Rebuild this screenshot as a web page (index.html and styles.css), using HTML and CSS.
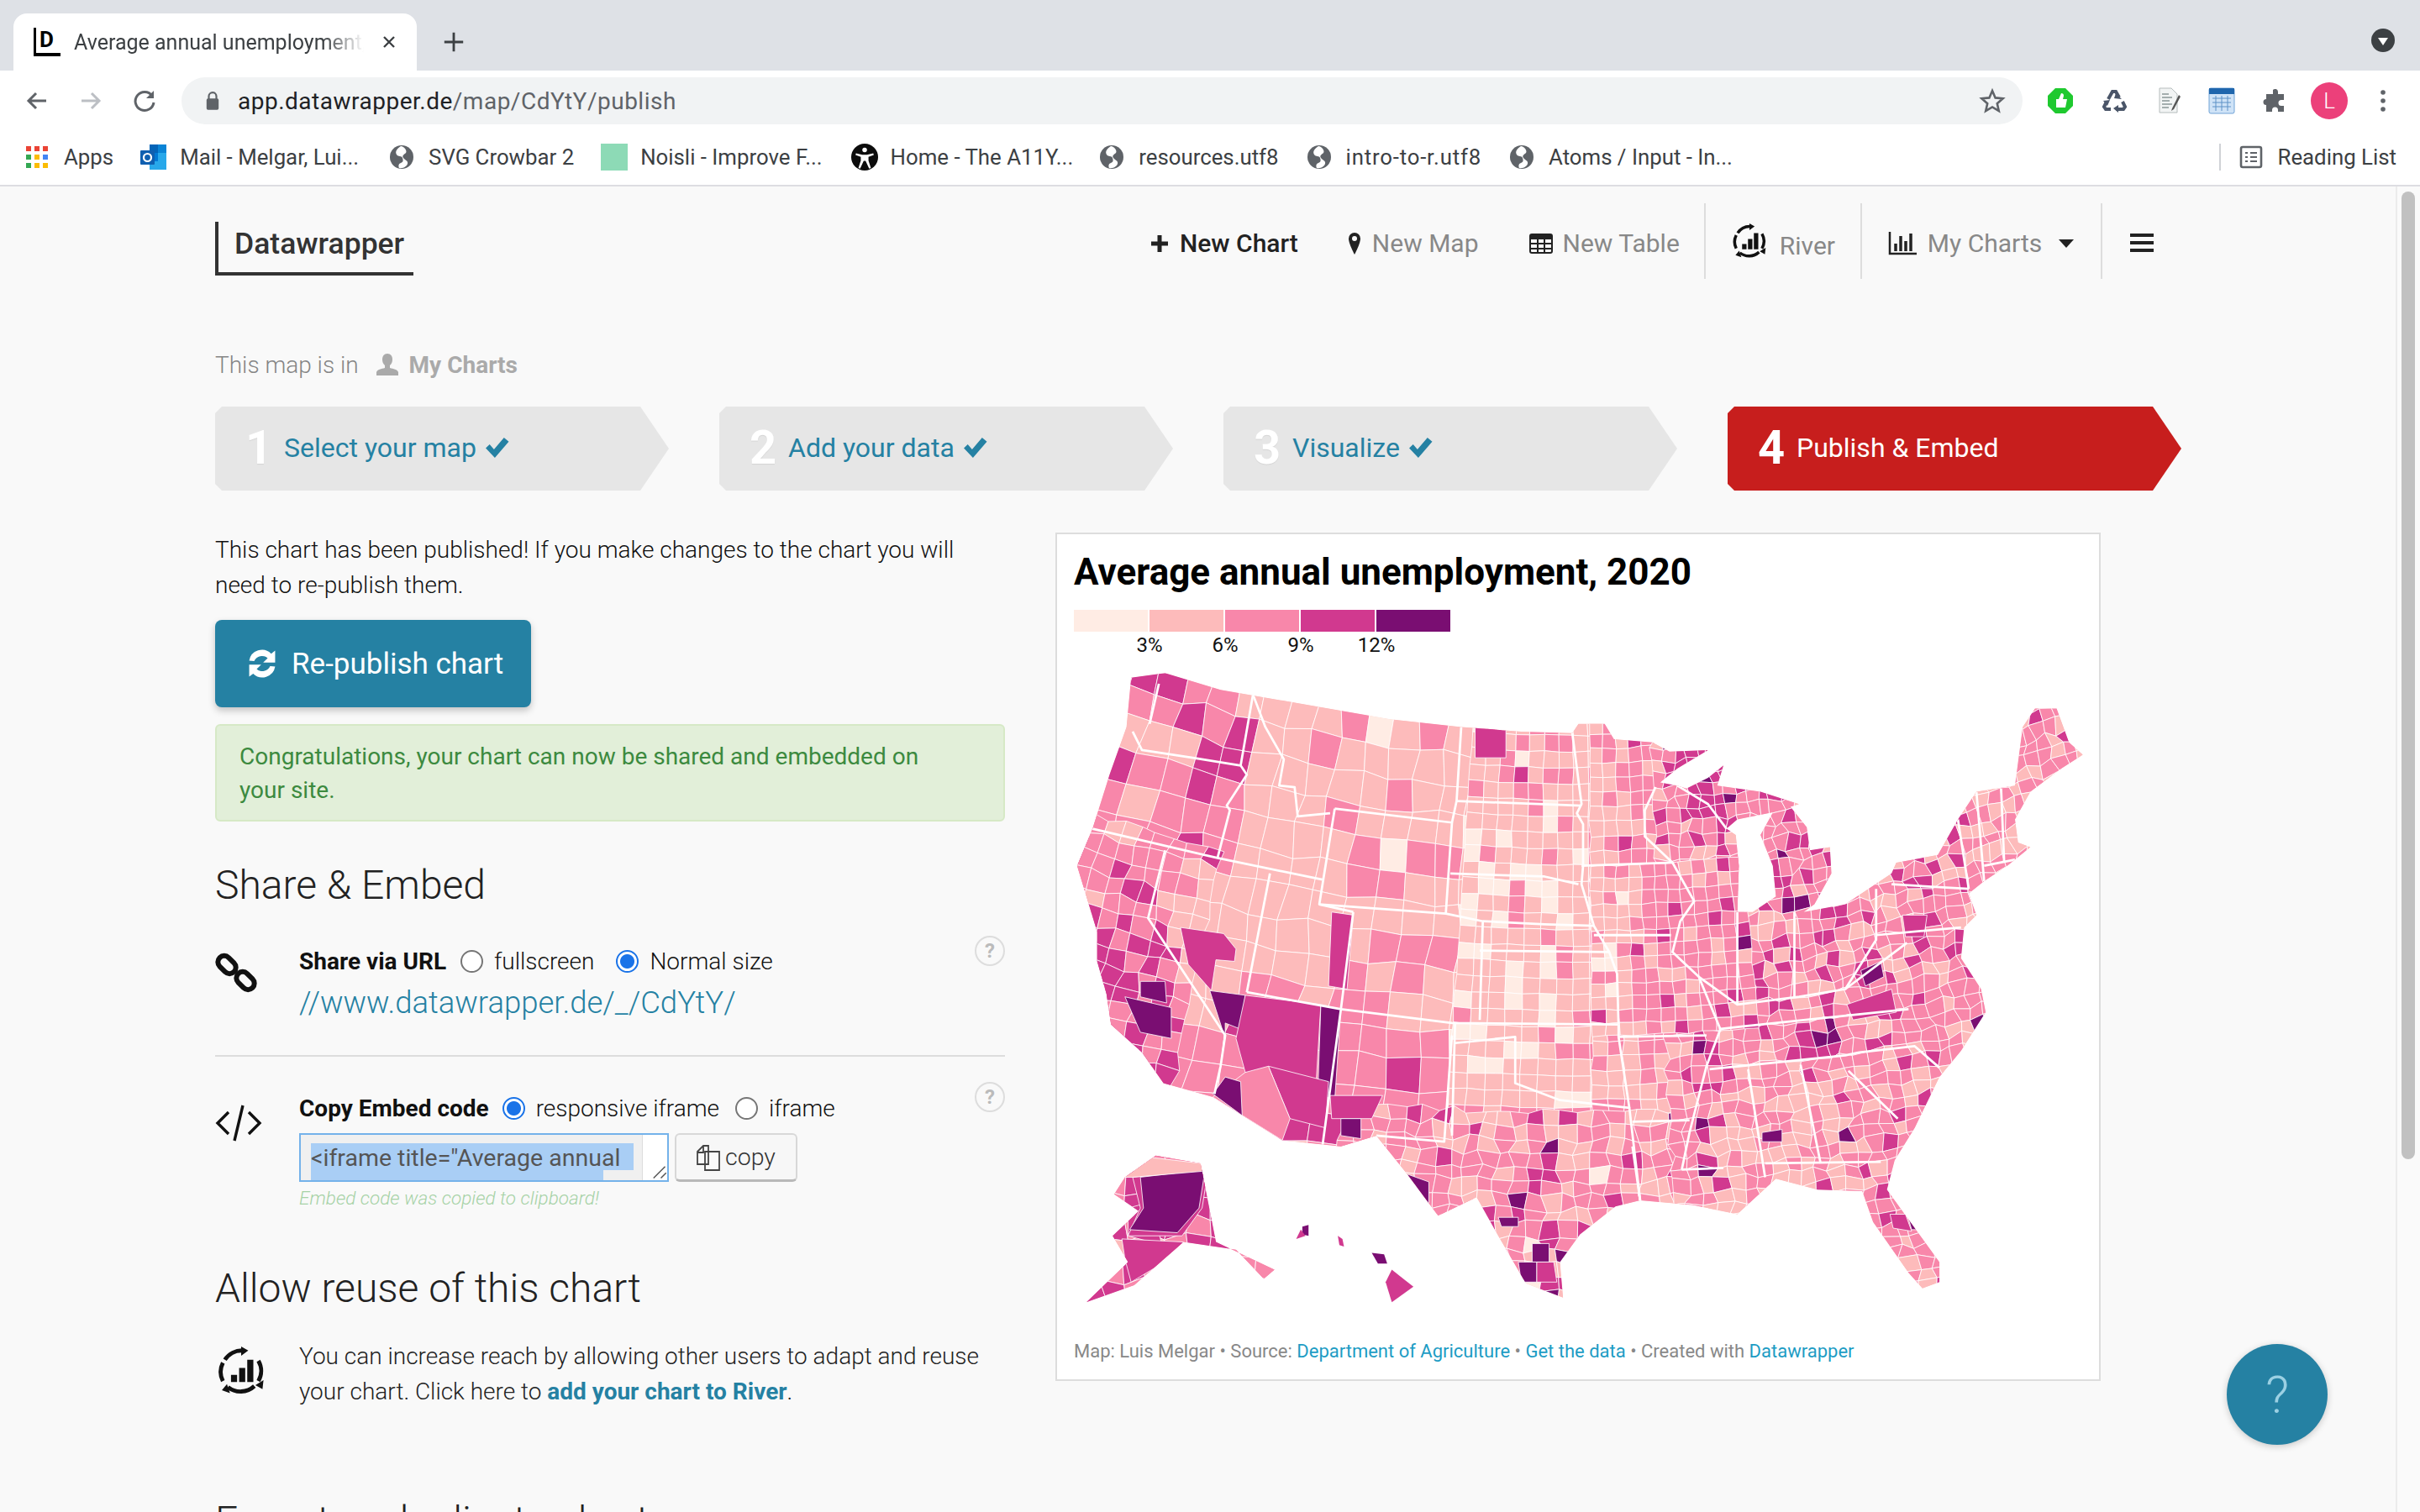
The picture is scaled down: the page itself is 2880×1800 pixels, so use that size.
FILE: index.html
```html
<!DOCTYPE html>
<html lang="en">
<head>
<meta charset="utf-8">
<title>Average annual unemployment, 2020</title>
<link rel="stylesheet" href="styles.css">
</head>
<body>
<header class="chrome">
  <div class="tabstrip">
    <div class="tab">
      <span class="favicon">D</span>
      <span class="tab-title">Average annual unemployment, 2020</span>
      <svg class="tab-close" viewBox="0 0 20 20"><path d="M4 4l12 12M16 4L4 16" stroke="#3c4043" stroke-width="2.4"/></svg>
    </div>
    <svg class="tab-new" viewBox="0 0 30 30"><path d="M15 3v24M3 15h24" stroke="#3c4043" stroke-width="3"/></svg>
    <span class="strip-fill"></span>
    <span class="profile-dot"><svg viewBox="0 0 28 28"><circle cx="14" cy="14" r="14" fill="#3c4043"/><path d="M8 11h12l-6 9z" fill="#fff"/></svg></span>
  </div>
  <div class="toolbar">
    <svg class="tb-ico" viewBox="0 0 32 32"><path d="M27 16H7M15 7l-9 9 9 9" fill="none" stroke="#5f6368" stroke-width="3"/></svg>
    <svg class="tb-ico" viewBox="0 0 32 32"><path d="M5 16h20M17 7l9 9-9 9" fill="none" stroke="#bcbfc4" stroke-width="3"/></svg>
    <svg class="tb-ico" viewBox="0 0 32 32"><path d="M25 10a11 11 0 1 0 2 8" fill="none" stroke="#5f6368" stroke-width="3"/><path d="M27 4v9h-9z" fill="#5f6368"/></svg>
    <div class="omnibox">
      <svg class="lock" viewBox="0 0 20 26"><path d="M5 11V7a5 5 0 0 1 10 0v4" fill="none" stroke="#5f6368" stroke-width="2.4"/><rect x="2" y="10" width="16" height="15" rx="2" fill="#5f6368"/></svg>
      <span class="url"><b>app.datawrapper.de</b>/map/CdYtY/publish</span>
      <svg class="star" viewBox="0 0 32 32"><path d="M16 4l3.6 8.4 9 .8-6.800 6 2 8.900L16 23.400l-7.800 4.700 2-8.900-6.800-6 9-.8z" fill="none" stroke="#5f6368" stroke-width="2.600"/></svg>
    </div>
    <div class="ext-row">
      <svg class="ext" viewBox="0 0 32 32"><path d="M10 1h12l9 9v12l-9 9H10l-9-9V10z" fill="#1fc92f"/><path d="M11 14h3l3-7c2 0 3 1 3 3l-1 4h5l-2 10H11z" fill="#fff"/></svg>
      <svg class="ext" viewBox="0 0 32 32"><g fill="none" stroke="#4a5568" stroke-width="4"><path d="M9 14l5-9h4l4 7"/><path d="M26 17l3 6-2 3h-9"/><path d="M12 26H6l-2-3 3-6"/></g><path d="M18 7l7 7-9-1zM21 21v9l-6-5zM3 16l8-1-3 7z" fill="#4a5568"/></svg>
      <svg class="ext" viewBox="0 0 32 32"><path d="M6 1h14l7 7v22H6z" fill="#f2f4f4" stroke="#b5bcbc"/><path d="M9 8h8M9 12h12M9 16h9M9 20h12M9 24h8" stroke="#8b9696" stroke-width="1.500"/><path d="M29 9l-8 16-1 3 3-2 8-15z" fill="#555"/></svg>
      <svg class="ext" viewBox="0 0 32 32"><rect x="1" y="1" width="30" height="30" rx="2" fill="#cfe3f7" stroke="#70a3d6"/><rect x="1" y="1" width="30" height="7" fill="#1f66ad"/><path d="M5 13h22M5 18h22M5 23h22M9 10v18M16 10v18M23 10v18" stroke="#5c91c6"/></svg>
      <svg class="ext" viewBox="0 0 32 32"><path d="M13 3a3.500 3.500 0 0 1 6 2v3h7v7h-3a3.500 3.500 0 0 0 0 7h3v7h-7v-2a3.500 3.500 0 0 0-7 0v2H5v-8a3.500 3.500 0 0 1 0-7V8h8z" fill="#5f6368"/></svg>
      <span class="avatar">L</span>
      <svg class="ext kebab" viewBox="0 0 8 32"><circle cx="4" cy="6" r="2.800" fill="#5f6368"/><circle cx="4" cy="16" r="2.800" fill="#5f6368"/><circle cx="4" cy="26" r="2.800" fill="#5f6368"/></svg>
    </div>
  </div>
  <div class="bookmarks">
    <span class="bm"><svg class="bm-ico" viewBox="0 0 28 28"><g><rect x="1" y="1" width="6" height="6" fill="#ea4335"/><rect x="11" y="1" width="6" height="6" fill="#ea4335"/><rect x="21" y="1" width="6" height="6" fill="#ea4335"/><rect x="1" y="11" width="6" height="6" fill="#34a853"/><rect x="11" y="11" width="6" height="6" fill="#fbbc04"/><rect x="21" y="11" width="6" height="6" fill="#4285f4"/><rect x="1" y="21" width="6" height="6" fill="#34a853"/><rect x="11" y="21" width="6" height="6" fill="#fbbc04"/><rect x="21" y="21" width="6" height="6" fill="#fbbc04"/></g></svg>Apps</span>
    <span class="bm tight"><svg class="bm-ico outlook" viewBox="0 0 32 32"><rect x="11" y="1" width="20" height="30" fill="#28a8ea"/><rect x="11" y="1" width="10" height="10" fill="#0364b8"/><rect x="21" y="1" width="10" height="10" fill="#0a84d6"/><rect x="11" y="11" width="10" height="10" fill="#0078d4"/><rect x="0" y="8" width="17" height="17" rx="1" fill="#0f5fb0"/><circle cx="8.500" cy="16.500" r="4.500" fill="none" stroke="#fff" stroke-width="2.200"/></svg>Mail - Melgar, Lui...</span>
    <span class="bm bm-svg"><svg class="bm-ico" viewBox="0 0 28 28"><use href="#globe"/></svg>SVG Crowbar 2</span>
    <span class="bm tight"><span class="noisli"></span>Noisli - Improve F...</span>
    <span class="bm tight bm-home"><svg class="bm-ico a11y" viewBox="0 0 28 28"><circle cx="14" cy="14" r="14" fill="#0c0c0c"/><circle cx="14" cy="6.500" r="2.400" fill="#fff"/><path d="M5 10l6.500 1.500h5L23 10l.5 1.800-5.500 2v4l2.500 7.500-1.800.7L15 18h-2l-3.700 8-1.800-.7L10 17.800v-4l-5.500-2z" fill="#fff"/></svg>Home - The A11Y...</span>
    <span class="bm"><svg class="bm-ico" viewBox="0 0 28 28"><use href="#globe"/></svg>resources.utf8</span>
    <span class="bm bm-intro"><svg class="bm-ico" viewBox="0 0 28 28"><use href="#globe"/></svg>intro-to-r.utf8</span>
    <span class="bm"><svg class="bm-ico" viewBox="0 0 28 28"><use href="#globe"/></svg>Atoms / Input - In...</span>
    <span class="bm-fill"></span>
    <span class="bm reading"><svg class="bm-ico" viewBox="0 0 28 28"><rect x="2" y="2" width="24" height="24" rx="2" fill="none" stroke="#5f6368" stroke-width="2.600"/><path d="M7 9h3M13 9h8M7 14h3M13 14h8M7 19h3M13 19h8" stroke="#5f6368" stroke-width="2.200"/></svg>Reading List</span>
  </div>
  <svg class="defs" width="0" height="0"><defs><g id="globe"><circle cx="14" cy="14" r="14" fill="#5f6368"/><path d="M13 1c-5 3-7 7-5 10s6 1 7 4 1 5-2 6-3 4-2 6c5 1 9-2 10-5 1-4-3-4-5-7s1-4 3-6-2-8-6-8z" fill="#fff"/></g></defs></svg>
</header>

<div class="viewport">
  <main class="page">
    <nav class="topnav">
      <div class="logo">Datawrapper</div>
      <div class="nav-links">
        <a class="nav-item strong"><svg class="ni" viewBox="0 0 24 24"><path d="M12 2v20M2 12h20" stroke="#222" stroke-width="5"/></svg>New Chart</a>
        <a class="nav-item maplink"><svg class="ni pin" viewBox="0 0 16 28"><path d="M8 1a7 7 0 0 0-7 7c0 6 7 19 7 19s7-13 7-19a7 7 0 0 0-7-7z" fill="#222"/><circle cx="8" cy="8" r="3" fill="#f9f9f9"/></svg>New Map</a>
        <a class="nav-item tablelink"><svg class="ni" viewBox="0 0 28 24"><rect x="1" y="1" width="26" height="22" rx="2" fill="none" stroke="#222" stroke-width="2"/><rect x="1" y="1" width="26" height="6" fill="#222"/><path d="M1 12h26M1 18h26M10 6v17M18 6v17" stroke="#222" stroke-width="2"/></svg>New Table</a>
        <a class="nav-item boxed river"><svg class="ni river-ico" viewBox="0 0 48 48"><use href="#rivermark"/></svg><span>River</span></a>
        <a class="nav-item boxed charts"><svg class="ni" viewBox="0 0 34 30"><path d="M2 1v26h32" fill="none" stroke="#222" stroke-width="2.500"/><path d="M9 24v-9M15 24V6M21 24V12M27 24V3" stroke="#222" stroke-width="3.500"/></svg>My Charts<i class="caret"></i></a>
        <a class="nav-item burger"><svg viewBox="0 0 28 24"><path d="M0 3h28M0 12h28M0 21h28" stroke="#222" stroke-width="4"/></svg></a>
      </div>
    </nav>
    <svg class="defs" width="0" height="0"><defs><g id="rivermark"><path d="M8 13A20 20 0 0 1 26 4M41 14a20 20 0 0 1 0 20M37 39a20 20 0 0 1-26 1M6 34a20 20 0 0 1 0-18" fill="none" stroke="#111" stroke-width="4"/><path d="M24 0l7 4-7 5zM46 33l-1 9-7-4zM13 46l-8-3 5-6z" fill="#111"/><path d="M14 28h6v7h-6zM22 21h6v14h-6zM30 13h6v22h-6z" fill="#111"/></g></defs></svg>

    <div class="crumb">This map is in <svg class="user" viewBox="0 0 28 28"><path d="M14 1c-4 0-6 3-6 7 0 3 1 5 3 7v3c-4 1-9 2-10 5v4h26v-4c-1-3-6-4-10-5v-3c2-2 3-4 3-7 0-4-2-7-6-7z" fill="#aaa"/></svg><b>My Charts</b></div>

    <ol class="steps">
      <li class="step"><span class="num">1</span><span class="label">Select your map</span><svg class="check" viewBox="0 0 28 24"><path d="M1 13l4.500-4.500 5 6L22 1l5.500 4.500L11.500 24z" fill="#2581a3"/></svg></li>
      <li class="step"><span class="num">2</span><span class="label">Add your data</span><svg class="check" viewBox="0 0 28 24"><path d="M1 13l4.500-4.500 5 6L22 1l5.500 4.500L11.500 24z" fill="#2581a3"/></svg></li>
      <li class="step"><span class="num">3</span><span class="label">Visualize</span><svg class="check" viewBox="0 0 28 24"><path d="M1 13l4.500-4.500 5 6L22 1l5.500 4.500L11.500 24z" fill="#2581a3"/></svg></li>
      <li class="step active"><span class="num">4</span><span class="label">Publish &amp; Embed</span></li>
    </ol>

    <div class="columns">
      <section class="left">
        <p class="intro">This chart has been published! If you make changes to the chart you will need to re-publish them.</p>
        <button class="btn-primary"><svg viewBox="0 0 32 32"><path d="M3 13A13 13 0 0 1 25 6l4-3v12H17l4.500-4.500a8.500 8.500 0 0 0-13.500 3zM29 19A13 13 0 0 1 7 26l-4 3V17h12l-4.500 4.500a8.500 8.500 0 0 0 13.500-3z" fill="#fff"/></svg>Re-publish chart</button>
        <div class="alert">Congratulations, your chart can now be shared and embedded on your site.</div>
        <h2 class="h-share">Share &amp; Embed</h2>

        <div class="share-row first">
          <svg class="row-ico link" viewBox="0 0 50 50"><g fill="none" stroke="#111" stroke-width="6"><rect x="2" y="8" width="24" height="15" rx="7.500" transform="rotate(45 14 15.500)"/><rect x="24" y="27" width="24" height="15" rx="7.500" transform="rotate(45 36 34.500)"/></g></svg>
          <div class="row-body">
            <div class="opts"><b>Share via URL</b><label class="opt"><i class="radio"></i>fullscreen</label><label class="opt"><i class="radio on"></i>Normal size</label></div>
            <a class="share-url">//www.datawrapper.de/_/CdYtY/</a>
          </div>
          <span class="help">?</span>
        </div>

        <div class="share-row second">
          <svg class="row-ico code" viewBox="0 0 56 44"><path d="M16 9L3 22l13 13M40 9l13 13-13 13M33 1l-10 42" fill="none" stroke="#111" stroke-width="3.400"/></svg>
          <div class="row-body">
            <div class="opts"><b>Copy Embed code</b><label class="opt"><i class="radio on"></i>responsive iframe</label><label class="opt"><i class="radio"></i>iframe</label></div>
            <div class="embed">
              <div class="embed-box">
                <div class="embed-text"><span class="sel">&lt;iframe title="Average annual</span><span class="sel2"></span></div>
                <div class="embed-side"><svg viewBox="0 0 16 16"><path d="M14 3L3 14M15 9l-5 5" stroke="#555" stroke-width="1.200"/></svg></div>
              </div>
              <button class="btn-copy"><svg viewBox="0 0 28 32"><path d="M1 9l7-7h6v22H1zM10 9h6l5 0 6 0v22H10z" fill="#f9f9f9" stroke="#444" stroke-width="1.800"/><path d="M8 2v8H1" fill="none" stroke="#444" stroke-width="1.800"/></svg>copy</button>
            </div>
            <div class="copied">Embed code was copied to clipboard!</div>
          </div>
          <span class="help">?</span>
        </div>

        <h2 class="h-reuse">Allow reuse of this chart</h2>
        <div class="share-row reuse">
          <svg class="row-ico riv" viewBox="0 0 48 48"><use href="#rivermark"/></svg>
          <p class="reuse-text">You can increase reach by allowing other users to adapt and reuse your chart. Click here to <a>add your chart to River</a>.</p>
        </div>
        <h2 class="h-export">Export or duplicate chart</h2>
      </section>

      <section class="chart">
        <h1 class="chart-title">Average annual unemployment, 2020</h1>
        <div class="legend"><i class="c0"></i><i class="c1"></i><i class="c2"></i><i class="c3"></i><i class="c4"></i></div>
        <div class="legend-labels"><span>3%</span><span>6%</span><span>9%</span><span>12%</span></div>
        <svg id="usmap" class="map" viewBox="695 430 660 420"></svg>
        <p class="chart-foot">Map: Luis Melgar • Source: <a>Department of Agriculture</a> • <a>Get the data</a> • Created with <a>Datawrapper</a></p>
      </section>
    </div>
  </main>
  <div class="scrollbar"><span class="thumb"></span></div>
  <button class="fab">?</button>
</div>
<script src="map.js"></script>
</body>
</html>
```
FILE: styles.css
```css
* { box-sizing: border-box; }
html, body { margin: 0; height: 100%; overflow: hidden; }
body { width: 2880px; height: 1800px; font-family: Roboto, "Liberation Sans", sans-serif; display: flex; flex-direction: column; background: #f9f9f9; }
.defs { position: absolute; }

/* browser chrome */
.chrome { flex: none; background: #fff; border-bottom: 2px solid #dddde2; height: 222px; }
.tabstrip { height: 84px; background: #dee1e6; display: flex; align-items: flex-end; padding-left: 16px; }
.tab { width: 480px; height: 68px; background: #fff; border-radius: 16px 16px 0 0; display: flex; align-items: center; padding: 0 23px 0 24px; color: #3c4043; font-size: 25px; position: relative; }
.favicon { width: 32px; height: 34px; border-left: 3px solid #000; border-bottom: 4px solid #000; font-weight: 700; font-size: 26px; line-height: 28px; color: #000; padding-left: 4px; flex: none; margin-right: 16px; }
.tab-title { flex: 1; white-space: nowrap; overflow: hidden; -webkit-mask-image: linear-gradient(90deg, #000 86%, transparent); mask-image: linear-gradient(90deg, #000 86%, transparent); }
.tab-close { width: 20px; height: 20px; margin-left: 20px; flex: none; }
.tab-new { width: 28px; height: 28px; margin: 0 0 20px 30px; }
.strip-fill { flex: 1; }
.profile-dot { width: 28px; height: 28px; margin: 0 30px 22px 0; }
.profile-dot svg { display: block; }
.toolbar { height: 64px; padding: 8px 0 0 28px; display: flex; align-items: center; gap: 32px; }
.tb-ico { width: 32px; height: 32px; flex: none; }
.omnibox { margin-left: -4px; width: 2191px; height: 56px; border-radius: 28px; background: #f1f3f4; display: flex; align-items: center; padding: 0 20px 0 28px; font-size: 28px; color: #5f6368; flex: none; }
.lock { width: 18px; height: 24px; margin-right: 21px; }
.url { flex: 1; letter-spacing: .5px; }
.url b { font-weight: 400; color: #202124; }
.star { width: 32px; height: 32px; }
.ext-row { display: flex; align-items: center; gap: 32px; margin-left: -3px; }
.ext { width: 32px; height: 32px; flex: none; }
.kebab { width: 8px; margin-left: 12px; }
.avatar { width: 44px; height: 44px; border-radius: 50%; background: #ec407a; color: #fff; font-size: 26px; font-weight: 300; display: flex; align-items: center; justify-content: center; margin: 0 -6px; }
.bookmarks { height: 72px; display: flex; align-items: center; padding: 6px 0 0 30px; gap: 32px; font-size: 25.800px; color: #3c4043; }
.bm { display: flex; align-items: center; gap: 18px; white-space: nowrap; }
.bm.tight { gap: 15px; }
.bm-svg { margin-left: 5px; }
.bm-home { margin-left: 2px; }
.bm-intro { margin-left: 2px; letter-spacing: .8px; margin-right: 2px; }
.bm-ico { width: 28px; height: 28px; flex: none; }
.outlook { width: 32px; height: 32px; }
.a11y { width: 32px; height: 32px; }
.noisli { width: 32px; height: 32px; background: #8ddab6; }
.bm-fill { flex: 1; }
.reading { border-left: 2px solid #d0d2d6; height: 32px; padding-left: 22px; margin-right: 28px; }

/* viewport */
.viewport { flex: 1; display: flex; overflow: hidden; position: relative; min-height: 0; }
.page { flex: 1; min-width: 0; padding: 0 0 0 256px; overflow: hidden; }
.scrollbar { width: 29px; flex: none; border-left: 2px solid #ececec; background: #fafafa; padding: 6px 6px 0 5px; }
.thumb { display: block; width: 16px; height: 1152px; border-radius: 8px; background: #c1c1c1; }
.fab { position: absolute; left: 2650px; top: 1378px; width: 120px; height: 120px; border-radius: 50%; background: #2581a3; border: 0; color: #9bd0e3; font: 300 62px Roboto, sans-serif; box-shadow: 0 2px 8px rgba(0,0,0,.2); }

/* top nav */
.topnav { display: flex; align-items: flex-start; height: 178px; padding-top: 20px; }
.logo { width: 236px; height: 64px; margin-top: 22px; border-left: 4px solid #333; border-bottom: 4px solid #333; font-size: 35.500px; font-weight: 500; line-height: 52px; padding-left: 19px; color: #333; white-space: nowrap; flex: none; }
.nav-links { display: flex; margin-left: 876px; height: 90px; align-items: center; color: #888; }
.nav-item { display: flex; align-items: center; height: 90px; white-space: nowrap; font-size: 30px; margin-right: 59px; padding-top: 5px; }
.nav-item.strong { color: #222; font-weight: 500; }
.ni { width: 24px; height: 24px; margin-right: 12px; flex: none; }
.pin { width: 16px; height: 28px; margin-right: 13px; }
.maplink { margin-right: 60px; }
.tablelink { margin-right: 29px; }
.tablelink .ni { width: 28px; }
.boxed { border-left: 2px solid #ddd; margin-right: 0; padding-top: 0; }
.river { width: 186px; padding-left: 31px; }
.river span { margin-top: 11px; }
.river-ico { width: 42px; height: 42px; margin-right: 15px; }
.charts { width: 288px; padding: 5px 0 0 31px; border-right: 2px solid #ddd; }
.charts .ni { width: 34px; height: 30px; margin-right: 13px; }
.caret { width: 0; height: 0; border: 9px solid transparent; border-top: 10px solid #222; border-bottom: 0; margin-left: 20px; }
.burger { margin: 0 0 0 33px; padding-top: 3px; }
.burger svg { width: 28px; height: 24px; }

/* breadcrumb and steps */
.crumb { display: flex; align-items: center; font-size: 28px; font-weight: 300; color: #858585; height: 34px; margin-top: 17px; }
.user { width: 28px; height: 28px; margin: 0 12px 0 20px; }
.crumb b { font-weight: 700; color: #aaa; }
.steps { list-style: none; margin: 33px 0 0; padding: 0; display: flex; gap: 60px; }
.step { width: 540px; height: 100px; background: #e6e6e6; display: flex; align-items: center; padding: 0 0 3px 36px; color: #2581a3; font-size: 32px; font-weight: 400; clip-path: polygon(8px 0, 506px 0, 540px 50%, 506px 100%, 8px 100%, 0 92%, 0 8%); }
.num { color: #fff; font-size: 56px; font-weight: 700; width: 46px; text-shadow: 0 1px 1px rgba(0,0,0,.08); }
.check { width: 29px; height: 25px; margin-left: 10px; }
.step.active { background: #c71e1d; color: #fff; }

/* columns */
.columns { display: flex; gap: 60px; margin-top: 50px; align-items: flex-start; }
.left { width: 940px; flex: none; }
.intro { margin: 0; font-size: 28px; font-weight: 300; line-height: 42px; color: #111; }
.btn-primary { margin-top: 20px; width: 376px; height: 104px; background: #2581a3; border: 0; border-radius: 8px; color: #fff; font: 400 35px Roboto, sans-serif; display: flex; align-items: center; padding: 0 0 0 37px; box-shadow: 0 4px 8px rgba(0,0,0,.22); }
.btn-primary svg { width: 38px; height: 38px; margin-right: 16px; }
.alert { margin-top: 20px; width: 940px; height: 116px; background: #e2efd9; border: 2px solid #d6e9c6; border-radius: 6px; padding: 17px 60px 0 27px; font-size: 28px; line-height: 40px; color: #3c8a3f; }
.h-share, .h-reuse, .h-export { margin: 0; font-weight: 300; font-size: 48px; line-height: 60px; color: #222; white-space: nowrap; }
.h-share { margin-top: 46px; }
.share-row { display: flex; position: relative; }
.first { margin-top: 42px; height: 132px; border-bottom: 2px solid #ddd; }
.second { padding-top: 43px; }
.row-ico { flex: none; }
.link { width: 50px; height: 50px; margin: 7px 50px 0 0; }
.code { width: 56px; height: 44px; margin: 14px 44px 0 0; }
.row-body { flex: 1; }
.opts { display: flex; align-items: center; height: 36px; font-size: 28px; font-weight: 300; color: #111; white-space: nowrap; }
.opts b { font-weight: 700; }
.opt { display: flex; align-items: center; margin-left: 17px; }
.opt + .opt { margin-left: 26px; }
.second .opt { margin-left: 16px; }
.second .opt + .opt { margin-left: 19px; }
.radio { width: 27px; height: 27px; border-radius: 50%; border: 2px solid #767676; background: #fff; margin-right: 13px; }
.radio.on { border-color: #1a73e8; background: radial-gradient(circle, #1a73e8 0 8px, #fff 9px); }
.share-url { display: block; font-size: 36.500px; font-weight: 300; color: #2581a3; margin-top: 8px; line-height: 48px; }
.help { position: absolute; right: 0; top: 0; width: 36px; height: 36px; border-radius: 50%; border: 2px solid #ddd; color: #bbb; font-size: 24px; font-weight: 700; text-align: center; line-height: 32px; }
.first .help { top: -12px; }
.second .help { top: 30px; }
.embed { display: flex; margin-top: 12px; gap: 7px; }
.embed-box { width: 440px; height: 58px; border: 2px solid #74b2ea; display: flex; background: #f0f0f0; overflow: hidden; }
.embed-text { flex: 1; padding: 10px 0 0 12px; position: relative; font-size: 28.500px; color: #555; font-weight: 400; white-space: nowrap; }
.sel { display: block; background: #a9cef5; width: 384px; height: 32px; line-height: 36px; }
.sel2 { display: block; background: #a9cef5; width: 348px; height: 14px; }
.embed-side { width: 30px; background: #fff; border-left: 1px solid #ddd; position: relative; flex: none; }
.embed-side svg { position: absolute; right: 0; bottom: 0; width: 20px; height: 20px; }
.btn-copy { width: 146px; height: 58px; border: 2px solid #d8d8d8; border-bottom: 3px solid #b9b9b9; border-radius: 6px; background: #f7f7f7; font: 300 28.500px Roboto, sans-serif; color: #333; display: flex; align-items: center; justify-content: center; padding: 0; }
.btn-copy svg { width: 28px; height: 32px; margin-right: 6px; }
.copied { font-size: 22.500px; line-height: 26px; font-style: italic; font-weight: 300; color: #a6d2a6; margin-top: 6px; white-space: nowrap; }
.h-reuse { margin-top: 65px; }
.reuse { margin-top: 30px; }
.riv { width: 58px; height: 60px; margin: 8px 40px 0 2px; }
.reuse-text { margin: 0; font-size: 28px; font-weight: 300; line-height: 42px; color: #222; width: 840px; }
.reuse-text a { color: #2581a3; font-weight: 700; }
.h-export { margin-top: 103px; }

/* chart card */
.chart { width: 1244px; height: 1010px; flex: none; background: #fff; border: 2px solid #ddd; padding: 0 20px; position: relative; }
.chart-title { margin: 20px 0 0; font-size: 44px; font-weight: 700; line-height: 50px; color: #000; white-space: nowrap; }
.legend { display: flex; gap: 2px; margin-top: 20px; width: 448px; }
.legend i { flex: 1; height: 26px; }
.c0 { background: #ffece4; } .c1 { background: #fdbbbb; } .c2 { background: #f887aa; } .c3 { background: #d1398f; } .c4 { background: #7a0e72; }
.legend-labels { display: grid; grid-template-columns: repeat(4, 90px); margin-left: 45px; font-size: 24px; line-height: 30px; font-weight: 400; color: #111; text-align: center; margin-top: 1px; }
.map { position: absolute; display: block; width: 1212px; height: 771px; left: 20px; top: 156px; overflow: visible; }
.chart-foot { position: absolute; left: 20px; top: 958px; margin: 0; font-size: 22px; line-height: 30px; font-weight: 400; color: #888; white-space: nowrap; }
.chart-foot a { color: #1d9cc4; }
```
FILE: map.js
```javascript
(function () {
  var NS = 'http://www.w3.org/2000/svg';
  var svg = document.getElementById('usmap');
  var C = ['#ffece4', '#fdbbbb', '#f887aa', '#d1398f', '#7a0e72'];
  var seed = 20200;
  function rnd() { seed = (seed * 16807) % 2147483647; return seed / 2147483647; }
  function el(n, a, parent) { var e = document.createElementNS(NS, n); for (var k in a) e.setAttribute(k, a[k]); (parent || svg).appendChild(e); return e; }

  var US = '732,438 754,435 790,446 860,458 900,465 946,470 985,473 1018,474 1022,468 1039,468 1045,478 1070,480 1081,486 1106,485 1086,497 1075,506 1086,508 1092,510 1106,503 1116,495 1112,508 1140,512 1165,520 1150,525 1125,530 1118,536 1124,540 1126,560 1125,590 1135,590 1150,580 1148,560 1140,540 1150,522 1158,520 1170,535 1172,550 1185,548 1186,565 1175,585 1168,590 1195,585 1225,565 1228,558 1255,553 1268,530 1280,512 1305,508 1310,470 1318,458 1332,458 1340,480 1349,488 1335,497 1315,512 1305,530 1307,545 1315,548 1300,560 1285,570 1275,578 1280,592 1272,600 1270,620 1283,640 1286,655 1270,680 1256,697 1240,730 1227,751 1222,770 1240,795 1256,817 1256,830 1245,834 1236,824 1213,791 1206,771 1177,770 1150,763 1125,786 1096,780 1062,777 1046,781 1023,799 1010,817 1012,840 988,831 970,800 956,775 931,787 911,760 891,735 868,742 830,738 785,710 753,701 739,681 719,663 716,643 710,622 710,603 697,560 707,536 718,501 729,470';
  var AK = '748,748 777,753 787,804 825,822 818,828 800,809 766,804 734,832 703,843 730,817 720,800 737,784 721,773 728,762';
  var defs = el('defs', {});
  var cp = el('clipPath', { id: 'land' }, defs);
  el('polygon', { points: US }, cp);
  el('polygon', { points: AK }, cp);

  function dist(x, y) {
    if (y > 745 && x < 840) return [0, .1, .6, .28, .02];
    if (y < 470 && x < 770) return [0, .02, .33, .65, 0];
    if (x > 1140 && x < 1190 && y > 525 && y < 590) return [0, .05, .62, .28, .05];
    if (x > 1075 && x < 1165 && y < 530) return [0, 0, .35, .55, .1];
    if (x < 760 && y > 600) return [0, 0, .38, .6, .02];
    if (x < 760 && y > 550) return [0, .05, .78, .17, 0];
    if (x < 810 && y < 555) return [0, .08, .77, .15, 0];
    if (x < 860 && y < 640) return [0, .92, .08, 0, 0];
    if (x < 945 && y < 565) return [.01, .76, .23, 0, 0];
    if (x < 868 && y < 660) return [.02, .7, .27, .01, 0];
    if (x < 868) return [0, .03, .77, .19, .01];
    if (x < 940 && y < 660) return [0, .4, .58, .02, 0];
    if (x < 940 && y < 745) return [0, .1, .82, .08, 0];
    if (x < 1005 && y > 520 && y < 720) return [.36, .54, .1, 0, 0];
    if (x < 1040 && y < 530) return [.04, .74, .2, .02, 0];
    if (x < 1060 && y > 790) return [.03, .2, .62, .12, .03];
    if (x < 1062 && y > 715) return [.01, .32, .6, .06, .01];
    if (x < 1060 && y > 520) return [.05, .68, .25, .02, 0];
    if (x < 1080 && y < 560) return [0, .3, .62, .07, .01];
    if (x > 1085 && x < 1112 && y > 670 && y < 775) return [0, .05, .55, .28, .12];
    if (x < 1090 && y > 670) return [0, .38, .52, .08, .02];
    if (x > 1180 && y > 770) return [0, .12, .84, .04, 0];
    if (x > 1112 && x < 1215 && y > 690) return [0, .42, .5, .07, .01];
    if (x > 1210 && y > 665) return [0, .27, .65, .07, .01];
    if (x > 1130 && x < 1240 && y > 610) return [0, .16, .62, .2, .02];
    if (x > 1250 && y < 590) return [0, .4, .56, .04, 0];
    return [0, .22, .66, .11, .01];
  }
  function pick(p) { var r = rnd(), s = 0; for (var i = 0; i < 5; i++) { s += p[i]; if (r < s) return i; } return 2; }
  /* the conic projection of the reference bends parallels and leans meridians */
  function warp(x, y) { return [x + (x - 1020) * (y - 600) * 0.0009, y - 0.00047 * (x - 1020) * (x - 1020)]; }

  var blocks = [
    [660, 450, 950, 790, 19, 20, 2.5, 1],
    [665, 575, 780, 720, 11, 11, 2.2, 1],
    [945, 465, 1030, 725, 10.5, 10.5, 0.5, 1],
    [1030, 465, 1075, 730, 9.5, 9.5, 0.8, 1],
    [885, 720, 1075, 850, 9, 9, 2.4, 1],
    [1075, 430, 1370, 850, 8, 8, 2.2, 1],
    [1030, 560, 1125, 665, 8.5, 8.5, 0.7, 1],
    [700, 745, 830, 845, 14, 14, 3, 0]
  ];
  var g = el('g', { 'clip-path': 'url(#land)', stroke: '#fff', 'stroke-width': '.45' });
  el('polygon', { points: US, fill: '#fdbbbb', stroke: 'none' }, g);
  el('polygon', { points: AK, fill: '#f887aa', stroke: 'none' }, g);
  blocks.forEach(function (b) {
    var nx = Math.ceil((b[2] - b[0]) / b[4]), ny = Math.ceil((b[3] - b[1]) / b[5]), v = [];
    for (var i = 0; i <= nx; i++) {
      v[i] = [];
      for (var j = 0; j <= ny; j++) {
        var px = b[0] + i * b[4] + (rnd() - .5) * 2 * b[6], py = b[1] + j * b[5] + (rnd() - .5) * 2 * b[6];
        v[i][j] = b[7] ? warp(px, py) : [px, py];
      }
    }
    for (i = 0; i < nx; i++) for (j = 0; j < ny; j++) {
      var q = [v[i][j], v[i + 1][j], v[i + 1][j + 1], v[i][j + 1]];
      var cx = (q[0][0] + q[1][0] + q[2][0] + q[3][0]) / 4, cy = (q[0][1] + q[1][1] + q[2][1] + q[3][1]) / 4;
      el('polygon', { points: q.join(' '), fill: C[pick(dist(cx, cy))] }, g);
    }
  });

  /* large counties that stand out in the reference */
  var big = [
    [3, '764,600 792,604 800,614 799,622 787,621 784,641 769,624'],
    [4, '738,635 754,635 755,649 738,645'],
    [4, '728,645 758,652 758,672 738,668'],
    [4, '783,641 806,644 803,666 793,662 793,672'],
    [3, '806,644 855,650 852,700 806,694 800,672'],
    [4, '855,650 868,653 864,712 853,708'],
    [3, '862,590 876,592 872,640 860,638'],
    [3, '821,690 860,700 858,730 835,724'],
    [2, '806,694 821,690 835,724 830,738 785,710'],
    [4, '793,697 803,700 804,722 785,708'],
    [3, '861,709 895,709 888,724 862,724'],
    [4, '868,724 881,724 881,737 868,735'],
    [3, '730,782 745,778 752,806 730,800'],
    [4, '911,760 925,765 925,782 915,775'],
    [4, '970,788 983,788 983,794 972,794'],
    [4, '992,805 1003,805 1003,817 992,817'],
    [4, '983,817 995,817 995,830 985,830'],
    [3, '995,817 1006,817 1008,830 995,830'],
    [3, '733,762 782,757 778,782 765,800 730,800 738,782'],
    [4, '738,762 780,757 776,782 762,798 731,796 740,782'],
    [1, '735,748 777,753 780,758 733,762 728,762'],
    [3, '726,802 766,804 752,818 732,830 728,815'],
    [3, '955,470 975,472 975,490 955,490'],
    [3, '1232,592 1248,592 1246,606 1234,606'],
    [4, '1205,628 1218,622 1220,632 1208,638'],
    [3, '1196,650 1225,640 1228,655 1200,660'],
    [4, '1141,733 1154,731 1154,739 1141,739'],
    [3, '1224,786 1234,786 1238,797 1226,795'],
    [4, '1234,782 1240,782 1242,796 1238,796']
  ];
  big.forEach(function (b) { el('polygon', { points: b[1], fill: C[b[0]] }, g); });

  /* Hawaii */
  [[3, '901,822 915,833 901,843 897,830'], [4, '888,811 896,812 898,818 892,818'], [3, '866,800 869,802 870,807 867,806'], [4, '843,794 847,793 847,800 843,799'], [3, '842,796 845,800 839,802']].forEach(function (h) {
    el('polygon', { points: h[1], fill: C[h[0]] });
  });

  /* state lines */
  var lines = [
    '750,442 747,455 744,468',
    '733,473 739,485 772,490 803,495 807,501 794,521 796,524 788,555',
    '811,449 803,495', '707,536 788,555 856,569',
    '754,550 743,594 793,670 790,690 786,708',
    '822,565 807,642', '811,449 819,470 831,491 828,508 838,509 840,528 861,526',
    '864,523 940,532 936,591 854,585 864,523',
    '946,470 943,518 940,532', '943,518 1024,521', '939,565 1000,567 1022,572',
    '936,591 960,596 958,660', '960,596 1000,598 1032,599', '958,615 1042,616',
    '876,590 868,653 940,662 1048,663', '942,662 940,735', '854,585 876,590',
    '807,642 868,653 856,742', '891,735 935,739 940,670',
    '942,675 981,671 981,701 1010,712 1055,717 1062,777', '1048,663 1048,671 1055,717',
    '1048,671 1105,670', '1057,726 1094,725', '1057,742 1062,777',
    '1089,757 1116,756',
    '1018,474 1024,520 1021,526 1025,533 1025,560 1024,572 1032,599 1042,616 1047,630 1048,663',
    '1024,560 1083,558', '1032,605 1082,605',
    '1072,509 1065,524 1065,541 1083,558 1097,583 1088,596 1083,616 1100,632 1114,666 1105,690 1094,733 1089,757',
    '1125,590 1125,650', '1162,590 1162,645', '1100,632 1125,650 1165,645 1195,640 1215,608 1215,575',
    '1215,605 1270,600', '1225,572 1275,575', '1195,640 1235,610',
    '1113,666 1130,664 1236,653', '1107,692 1195,683 1204,681 1240,677 1256,691',
    '1132,692 1143,762', '1166,689 1179,753', '1143,753 1218,752', '1197,693 1229,724',
    '1086,508 1106,520 1118,536', '1268,530 1275,575', '1280,512 1285,570', '1296,510 1298,558', '1285,560 1305,556'
  ];
  var st = el('g', { 'clip-path': 'url(#land)', fill: 'none', stroke: '#fff', 'stroke-width': '1.500', 'stroke-linejoin': 'round' });
  lines.forEach(function (l) { el('polyline', { points: l }, st); });
})();
```
